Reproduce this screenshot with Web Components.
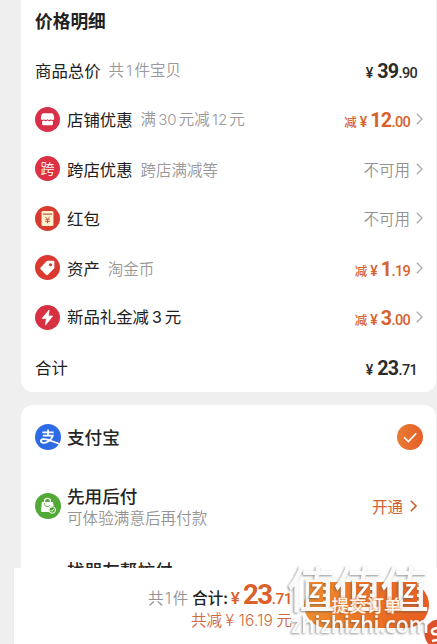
<!DOCTYPE html>
<html lang="zh-CN">
<head>
<meta charset="utf-8">
<title>价格明细</title>
<style>
  body {
    margin: 0;
    width: 437px;
    height: 644px;
    overflow: hidden;
    background: #efefef;
    color: #222;
    font-family: "Noto Sans CJK SC", sans-serif;
  }
  i { font-style: normal; font-family: Inter, sans-serif; font-size: .97em; margin: 0 2.2px; }
</style>
</head>
<body>
<order-page>
  <info-card first>
    <card-title>价格明细</card-title>
    <price-row label="商品总价"><span slot="note">共<i>1</i>件宝贝</span><price-amount slot="value" whole="39" cents=".90"></price-amount></price-row>
    <price-row label="店铺优惠" icon="shop" arrow><span slot="note">满<i>30</i>元减<i>12</i>元</span><price-amount slot="value" off whole="12" cents=".00"></price-amount></price-row>
    <price-row label="跨店优惠" icon="cross" arrow><span slot="note">跨店满减等</span><span slot="value">不可用</span></price-row>
    <price-row label="红包" icon="packet" arrow><span slot="value">不可用</span></price-row>
    <price-row label="资产" icon="tag" arrow><span slot="note">淘金币</span><price-amount slot="value" off whole="1" cents=".19"></price-amount></price-row>
    <price-row icon="flash" arrow><span slot="label">新品礼金减<i style="margin:0 3px">3</i>元</span><price-amount slot="value" off whole="3" cents=".00"></price-amount></price-row>
    <price-row label="合计"><price-amount slot="value" whole="23" cents=".71"></price-amount></price-row>
  </info-card>
  <info-card>
    <pay-row icon="alipay" name="支付宝" checked></pay-row>
    <pay-row icon="later" name="先用后付" desc="可体验满意后再付款" action="开通"></pay-row>
    <pay-row name="找朋友帮忙付" last></pay-row>
  </info-card>
  <submit-bar slot="footer"></submit-bar>
  <water-mark slot="mark"></water-mark>
</order-page>

<script>
const ICONS = {
  shop: `<circle cx="12" cy="12" r="12" fill="#d9304a"/>
    <path d="M8 6h8q1.500 0 1.900 1.600l.6 3.200q0 1.600-1.500 1.600-1.200 0-1.700-.7-.6.8-1.700.8t-1.700-.8q-.6.8-1.700.8t-1.700-.8q-.5.7-1.500.7-1.500 0-1.400-1.600l.6-3.200Q6.600 6 8 6z" fill="#fff"/>
    <path d="M6.800 13.500q1 0 1.700-.5.800.7 1.800.7t1.700-.7q.8.7 1.800.7t1.700-.7q.7.5 1.700.5v2.500q0 1.500-1.500 1.500H8.300q-1.500 0-1.500-1.500z" fill="#fff"/>`,
  cross: `<circle cx="12" cy="12" r="12" fill="#dc3045"/>
    <text x="12" y="17" text-anchor="middle" font-size="13.500" font-weight="350" fill="#fff">跨</text>`,
  packet: `<circle cx="12" cy="12" r="12" fill="#d93a30"/>
    <rect x="6.300" y="4.700" width="11.400" height="14.600" rx="1.300" fill="#fff0cf"/>
    <path d="M7.500 7.800h9" stroke="#bd4936" stroke-width="1.100"/>
    <path d="M9.900 10.300l2.100 2.600 2.100-2.600M12 12.900v3.600M9.900 13.200h4.200M9.900 14.900h4.200" fill="none" stroke="#cf4a35" stroke-width=".9"/>`,
  tag: `<circle cx="12" cy="12" r="12" fill="#db382f"/>
    <path d="M12.300 5.600h5.200q1.100 0 1.100 1.100v5.200q0 .7-.5 1.200l-5.800 5.800q-.9.9-1.800 0l-5.100-5.100q-.9-.9 0-1.800l5.700-5.900q.5-.5 1.200-.5z" fill="#fff"/>
    <circle cx="14.900" cy="9.300" r="1.500" fill="#db382f"/>`,
  flash: `<circle cx="12" cy="12" r="12" fill="#d83043"/>
    <path d="M13.500 4.800L6.800 13h4.100l-.8 6.300 6.900-8.700h-4.100z" fill="#fff" stroke="#fff" stroke-width=".7" stroke-linejoin="round"/>`,
  alipay: `<circle cx="12" cy="12" r="12" fill="#2d6be5"/>
    <path d="M6.800 7.800h10.400M12 5v5.500M7.200 10.700h9.300c-.8 2.500-2.600 4.700-5.200 6-2.400 1.200-5.900 1-5.900-.9 0-2.100 3.300-2.300 6-1.400l11 3.800" fill="none" stroke="#fff" stroke-width="1.600"/>`,
  later: `<circle cx="12" cy="12" r="12" fill="#52aa36"/>
    <path d="M6.300 8.200h10.300l.6 4.100q-3.700-.2-4.500 3.400l.2 1.800H6.500q-1 0-.9-1z" fill="#fff"/>
    <path d="M8.700 10V7.800q0-2.800 2.800-2.800t2.800 2.800V10" fill="none" stroke="#fff" stroke-width="1.100"/>
    <path d="M8.800 9.300v1.200q0 2 2.700 2 1.800 0 2.500-1.400" fill="none" stroke="#52aa36" stroke-width=".8"/>
    <circle cx="15.900" cy="15.700" r="3" fill="#52aa36" stroke="#fff" stroke-width=".9"/>
    <path d="M14.400 15.700l1.200 1.200 2-2.300" fill="none" stroke="#fff" stroke-width=".9"/>`,
  check: `<defs><linearGradient id="g"><stop stop-color="#e87c33"/><stop offset="1" stop-color="#e65e28"/></linearGradient></defs>
    <circle cx="12" cy="12" r="12" fill="url(#g)"/>
    <path d="M6.500 12.200l4 4.100 7.300-7.800" fill="none" stroke="#fff" stroke-width="1.500"/>`
};

const arrow = (color, size, width) => `<svg class="arrow" width="7" height="${size}" viewBox="0 0 7 12" fill="none" stroke="${color}" stroke-width="${width}"><path d="M.8.800L6 6 .8 11.200"/></svg>`;

class OrderPage extends HTMLElement {
  constructor() {
    super();
    this.attachShadow({ mode: 'open' }).innerHTML = `
      <style>
        :host { display: flex; flex-direction: column; position: relative; height: 644px; overflow: hidden; }
        main { flex: 1; min-height: 0; overflow: hidden; padding: 0 1px 0 21px; display: flex; flex-direction: column; gap: 13px; }
      </style>
      <main><slot></slot></main>
      <slot name="footer"></slot>
      <slot name="mark"></slot>`;
  }
}

class InfoCard extends HTMLElement {
  constructor() {
    super();
    this.attachShadow({ mode: 'open' }).innerHTML = `
      <style>
        :host { display: block; flex: none; background: #fff; border-radius: 12px; padding: 0 13px 0 14px; }
        :host([first]) { border-radius: 0 0 12px 12px; height: 392px; }
      </style>
      <slot></slot>`;
  }
}

class CardTitle extends HTMLElement {
  constructor() {
    super();
    this.attachShadow({ mode: 'open' }).innerHTML = `
      <style>
        :host { display: flex; align-items: center; height: 45px; font-size: 17.700px; font-weight: 700; line-height: 1; box-sizing: border-box; padding-bottom: 3px; }
      </style>
      <slot></slot>`;
  }
}

class PriceAmount extends HTMLElement {
  connectedCallback() {
    const off = this.hasAttribute('off');
    this.attachShadow({ mode: 'open' }).innerHTML = `
      <style>
        :host { display: flex; align-items: baseline; color: #2b2b2b; font-family: Roboto, "Noto Sans CJK SC", sans-serif; font-weight: 500; line-height: 20px; padding-top: 6px; }
        :host([off]) { color: #d8622e; }
        .off { font-size: 12.500px; margin-right: 3px; }
        .yen { font-size: 14px; margin-right: 4px; }
        .whole { font-size: 19.700px; font-weight: 700; letter-spacing: -.9px; margin-right: .5px; }
        .cents { font-size: 14.500px; letter-spacing: -.7px; }
        :host([off]) .yen { margin-right: 3px; }
      </style>
      ${off ? '<span class="off">减</span>' : ''}<span class="yen">¥</span><span class="whole">${this.getAttribute('whole')}</span><span class="cents">${this.getAttribute('cents')}</span>`;
  }
}

class PriceRow extends HTMLElement {
  connectedCallback() {
    const icon = this.getAttribute('icon');
    this.attachShadow({ mode: 'open' }).innerHTML = `
      <style>
        :host { display: flex; align-items: center; height: 49.500px; line-height: 24px; white-space: nowrap; }
        .icon { flex: none; width: 25px; height: 25px; margin-right: 7px; overflow: visible; }
        .label { font-size: 16.400px; color: #202020; }
        .note { font-size: 15.500px; font-weight: 350; color: #999; margin-left: 8px; flex: 1; }
        .value { font-size: 15.500px; font-weight: 350; color: #929292; }
        .arrow { margin-left: 6px; flex: none; }
        :host(:not([arrow])) .value { margin-right: 6px; }
      </style>
      ${icon ? `<svg class="icon" viewBox="0 0 24 24">${ICONS[icon]}</svg>` : ''}
      <span class="label"><slot name="label">${this.getAttribute('label') || ''}</slot></span>
      <span class="note"><slot name="note"></slot></span>
      <span class="value"><slot name="value"></slot></span>
      ${this.hasAttribute('arrow') ? arrow('#aaa', 12, 1.3) : ''}`;
  }
}

class PayRow extends HTMLElement {
  connectedCallback() {
    const icon = this.getAttribute('icon');
    const desc = this.getAttribute('desc');
    const action = this.getAttribute('action');
    this.attachShadow({ mode: 'open' }).innerHTML = `
      <style>
        :host { display: flex; align-items: center; height: 64px; white-space: nowrap; }
        :host([desc]) { height: 74px; }
        :host([last]) { height: 53px; }
        .icon { flex: none; width: 26px; height: 26px; margin-right: 6px; }
        .icon.none { visibility: hidden; }
        .text { flex: 1; }
        .name { font-size: 17.600px; line-height: 24px; font-weight: 500; color: #252525; }
        .desc { font-size: 15.600px; line-height: 20px; font-weight: 350; color: #959595; margin-top: -1px; padding-bottom: 2px; }
        .action { font-size: 15.500px; color: #d06233; font-weight: 400; margin-right: 7px; }
        .arrow { margin-right: 6px; }
      </style>
      <svg class="icon ${icon ? '' : 'none'}" viewBox="0 0 24 24">${ICONS[icon] || ''}</svg>
      <div class="text"><div class="name">${this.getAttribute('name')}</div>${desc ? `<div class="desc">${desc}</div>` : ''}</div>
      ${action ? `<span class="action">${action}</span>${arrow('#d06233', 12, 1.6)}` : ''}
      ${this.hasAttribute('checked') ? `<svg width="26" height="26" viewBox="0 0 24 24">${ICONS.check}</svg>` : ''}`;
  }
}

class SubmitBar extends HTMLElement {
  constructor() {
    super();
    this.attachShadow({ mode: 'open' }).innerHTML = `
      <style>
        :host { display: flex; flex: none; height: 76px; margin-left: 14px; background: #fff; box-sizing: border-box; padding: 14px 8px 0 0; justify-content: flex-end; align-items: flex-start; white-space: nowrap; }
        .sum { display: flex; flex-direction: column; align-items: flex-end; margin-right: 12px; }
        .total { display: flex; align-items: baseline; font-size: 15.500px; line-height: 25px; height: 26px; }
        i { font-style: normal; font-family: Inter, sans-serif; }
        .count { color: #929292; font-weight: 350; margin-right: 4px; }
        .count i { margin: 0 1.500px; }
        .word { font-weight: 500; color: #222; margin-right: 3px; }
        .num { font-family: Roboto, sans-serif; color: #dc602c; font-weight: 500; }
        .yen { font-size: 17px; margin-right: 3px; }
        .whole { font-size: 27.500px; font-weight: 700; letter-spacing: -1.300px; margin-right: 0; }
        .cents { font-size: 15.500px; letter-spacing: -.6px; }
        .saved { font-size: 15.500px; line-height: 22px; font-weight: 350; color: #d0683d; }
        .saved i { font-size: 15.500px; letter-spacing: .2px; }
        button { font: 500 17.500px/1 "Noto Sans CJK SC", sans-serif; color: #fff5e8; border: 0; padding: 0; width: 125px; height: 46px; border-radius: 23px; background: linear-gradient(90deg, #ef8c2c, #e85c20); }
        /* label stays readable above the stamp */
        button span { position: relative; z-index: 1; text-shadow: 0 0 2px #d9722e, 0 0 1px #d9722e; }
      </style>
      <div class="sum">
        <div class="total"><span class="count">共<i>1</i>件</span><span class="word">合计:</span><span class="num yen">¥</span><span class="num whole">23</span><span class="num cents">.71</span></div>
        <div class="saved">共减 <i>¥ 16.19</i> 元</div>
      </div>
      <button><span>提交订单</span></button>`;
  }
}

class WaterMark extends HTMLElement {
  constructor() {
    super();
    // floats over the bar, like a stamp
    this.attachShadow({ mode: 'open' }).innerHTML = `
      <style>
        :host { display: block; position: absolute; left: 282px; top: 556px; width: 155px; height: 88px; pointer-events: none; }
        svg { display: block; }
        .stamp { filter: drop-shadow(-1px 1px .8px rgba(90, 90, 90, .7)); fill: #fff; }
      </style>
      <svg width="155" height="88" viewBox="0 0 155 88">
        <circle cx="157" cy="78" r="14.500" fill="#de5129"/>
        <path d="M155 72q-6 1-5 4t5 2M155 84l-5 1" fill="none" stroke="#fff" stroke-width="2.500"/>
        <g class="stamp">
          <text x="5" y="52" textLength="142" font-family="Noto Sans CJK SC, sans-serif" font-weight="500" font-size="49" opacity=".95">值值值</text>
          <text x="9" y="77" textLength="138" lengthAdjust="spacingAndGlyphs" font-family="Open Sans, sans-serif" font-weight="600" font-size="24" opacity=".95">zhizhizhi.com</text>
        </g>
        <g>
          <path d="M27 26h14v20H27z" fill="#ee852b"/>
          <path d="M74 26h14v20H74z" fill="#ea7326"/>
          <path d="M121 26h14v20h-14z" fill="#e86422"/>
        </g>
        <g class="stamp" font-family="Open Sans, sans-serif" font-weight="700" font-style="italic" font-size="20">
          <text x="28" y="42">Z</text>
          <text x="75" y="42">Z</text>
          <text x="122" y="42">Z</text>
        </g>
      </svg>`;
  }
}

customElements.define('order-page', OrderPage);
customElements.define('info-card', InfoCard);
customElements.define('card-title', CardTitle);
customElements.define('price-amount', PriceAmount);
customElements.define('price-row', PriceRow);
customElements.define('pay-row', PayRow);
customElements.define('submit-bar', SubmitBar);
customElements.define('water-mark', WaterMark);
</script>
</body>
</html>
